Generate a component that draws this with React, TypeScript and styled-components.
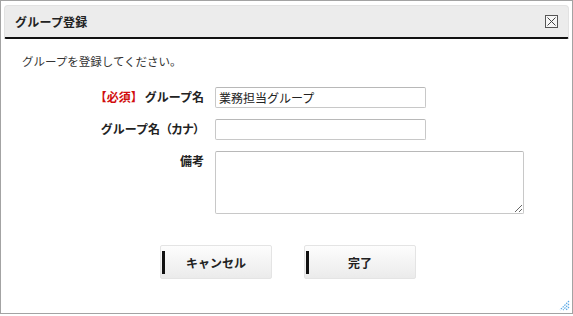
import React from "react";
import styled, { createGlobalStyle } from "styled-components";

const GlobalStyle = createGlobalStyle`
  html, body {
    margin: 0;
    padding: 0;
    background: #ffffff;
  }
  body {
    font-family: "Noto Sans CJK JP", "Liberation Sans", sans-serif;
    font-size: 12px;
    color: #222;
  }
`;

const Dialog = styled.div`
  position: relative;
  width: 571px;
  height: 312px;
  border: 1px solid #a3a3a3;
  box-shadow: 1px 1px 0 #d6d6d6;
  background: #fff;
  display: flex;
  flex-direction: column;
`;

const TitleBar = styled.div`
  margin: 4px 3px 0 3px;
  height: 31px;
  background: #ececec;
  border: 1px solid #e2e2e2;
  border-bottom: 2px solid #111;
  border-radius: 4px 4px 2px 2px;
  display: flex;
  align-items: center;
  justify-content: space-between;
  padding: 0 10px 0 10px;
`;

const Title = styled.span`
  font-weight: bold;
  font-size: 12px;
  color: #222;
  letter-spacing: 0.2px;
`;

const CloseButton = styled.button`
  width: 13px;
  height: 13px;
  padding: 0;
  border: 1px solid #555;
  background: #f6f6f6;
  display: flex;
  align-items: center;
  justify-content: center;
  cursor: pointer;
`;

const Body = styled.div`
  flex: 1;
  display: flex;
  flex-direction: column;
  padding: 14px 0 0 21px;
`;

const Intro = styled.p`
  margin: 0 0 18px 0;
  font-size: 11.5px;
  color: #333;
`;

const Form = styled.div`
  display: grid;
  grid-template-columns: 182px auto;
  column-gap: 11px;
  row-gap: 11px;
  align-items: start;
`;

const Label = styled.label`
  text-align: right;
  font-weight: bold;
  font-size: 12px;
  color: #222;
  line-height: 20px;
`;

const Required = styled.span`
  color: #d10d0d;
  margin-right: 2px;
`;

const Kana = styled.span`
  letter-spacing: -1px;
`;

const TextInput = styled.input`
  width: 211px;
  height: 21px;
  box-sizing: border-box;
  border: 1px solid #c8c8c8;
  border-top-color: #b8b8b8;
  border-radius: 2px;
  padding: 0 3px;
  font-family: inherit;
  font-size: 12px;
  color: #222;
  outline: none;
`;

const TextArea = styled.textarea`
  width: 309px;
  height: 63px;
  box-sizing: border-box;
  border: 1px solid #c8c8c8;
  border-top-color: #b8b8b8;
  border-radius: 2px;
  padding: 3px;
  font-family: inherit;
  font-size: 12px;
  outline: none;
  resize: both;
`;

const Buttons = styled.div`
  display: flex;
  gap: 32px;
  margin: 31px 0 0 138px;
`;

const ActionButton = styled.button`
  position: relative;
  width: 112px;
  height: 34px;
  border: 1px solid #e4e4e4;
  border-radius: 2px;
  background: linear-gradient(#fdfdfd, #ebebeb);
  font-family: inherit;
  font-weight: bold;
  font-size: 12px;
  color: #222;
  cursor: pointer;
  padding: 0;

  &::before {
    content: "";
    position: absolute;
    left: 1px;
    top: 5px;
    width: 3px;
    height: 23px;
    background: #111;
  }
`;

const Grip = styled.svg`
  position: absolute;
  right: 2px;
  bottom: 2px;
`;

export default function App() {
  return (
    <>
      <GlobalStyle />
      <Dialog>
        <TitleBar>
          <Title>グループ登録</Title>
          <CloseButton aria-label="close">
            <svg width="11" height="11" viewBox="0 0 11 11">
              <path d="M1.5 1.5 L9.5 9.5 M9.5 1.5 L1.5 9.5" stroke="#444" strokeWidth="1" />
            </svg>
          </CloseButton>
        </TitleBar>
        <Body>
          <Intro>グループを登録してください。</Intro>
          <Form>
            <Label>
              <Required>【必須】</Required>グループ名
            </Label>
            <TextInput defaultValue="業務担当グループ" />
            <Label>
              グループ名<Kana>（カナ）</Kana>
            </Label>
            <TextInput />
            <Label>備考</Label>
            <TextArea />
          </Form>
          <Buttons>
            <ActionButton>キャンセル</ActionButton>
            <ActionButton>完了</ActionButton>
          </Buttons>
        </Body>
        <Grip width="11" height="11" viewBox="0 0 11 11">
          <path d="M10 1 L1 10 M10 4 L4 10 M10 7 L7 10" stroke="#5aa9e6" strokeWidth="1.2" strokeDasharray="1.5 1" />
        </Grip>
      </Dialog>
    </>
  );
}
